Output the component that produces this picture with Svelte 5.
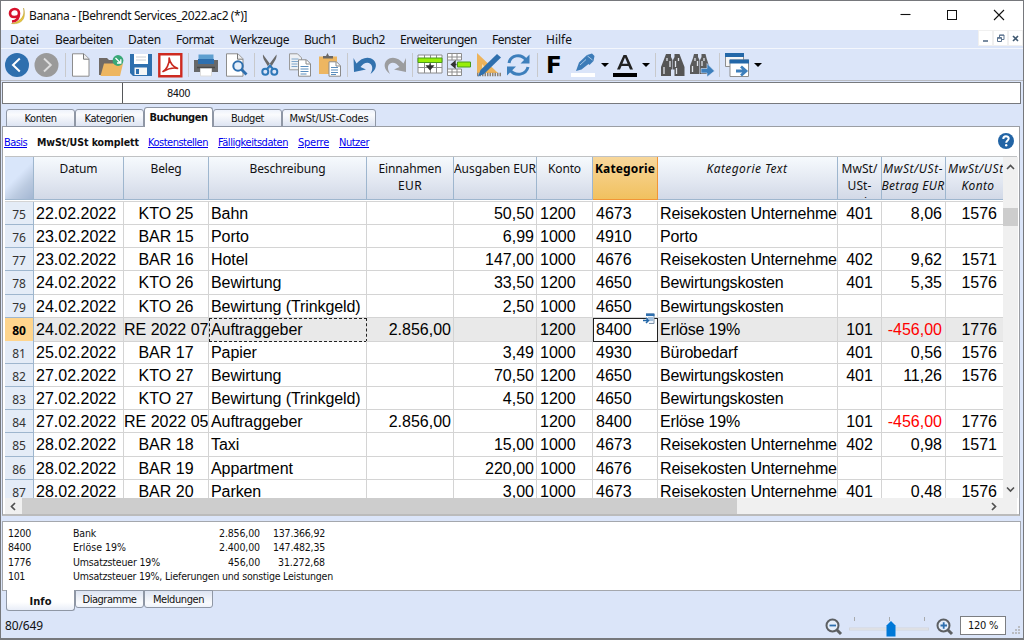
<script>
  const menus = [
    ['Datei', 10, 29], ['Bearbeiten', 55, 58], ['Daten', 128, 33], ['Format', 176, 38],
    ['Werkzeuge', 230, 59], ['Buch1', 304, 33], ['Buch2', 352, 33], ['Erweiterungen', 400, 77],
    ['Fenster', 492, 39], ['Hilfe', 546, 26]
  ];

  const tabs = [
    { name: 'Konten', w: 69, t: 32 },
    { name: 'Kategorien', w: 69, t: 50 },
    { name: 'Buchungen', w: 69, t: 58, on: true },
    { name: 'Budget', w: 69, t: 33 },
    { name: 'MwSt/USt-Codes', w: 94, t: 79 }
  ];

  const views = [
    { name: 'Basis', t: 23 }, { name: 'MwSt/USt komplett', t: 102, on: true },
    { name: 'Kostenstellen', t: 60 }, { name: 'Fälligkeitsdaten', t: 70 },
    { name: 'Sperre', t: 31 }, { name: 'Nutzer', t: 30 }
  ];

  const heads = [
    { l: [['Datum', 38]] }, { l: [['Beleg', 31]] }, { l: [['Beschreibung', 76]] },
    { l: [['Einnahmen', 63], ['EUR', 24]] }, { l: [['Ausgaben EUR', 82]] }, { l: [['Konto', 33]] },
    { l: [['Kategorie', 60]], on: true }, { l: [['Kategorie Text', 81]], it: true },
    { l: [['MwSt/', 36], ['USt-', 24], ['Code', 28]] },
    { l: [['MwSt/USt-', 60], ['Betrag EUR', 63]], it: true },
    { l: [['MwSt/USt-', 60], ['Konto', 33]], it: true, last: true }
  ];

  const R = 'Reisekosten Unternehmer';
  const rows = [
    [75, '22.02.2022', 'KTO 25', 'Bahn', '', '50,50', '1200', '4673', R, '401', '8,06', '1576'],
    [76, '23.02.2022', 'BAR 15', 'Porto', '', '6,99', '1000', '4910', 'Porto', '', '', ''],
    [77, '23.02.2022', 'BAR 16', 'Hotel', '', '147,00', '1000', '4676', R, '402', '9,62', '1571'],
    [78, '24.02.2022', 'KTO 26', 'Bewirtung', '', '33,50', '1200', '4650', 'Bewirtungskosten', '401', '5,35', '1576'],
    [79, '24.02.2022', 'KTO 26', 'Bewirtung (Trinkgeld)', '', '2,50', '1000', '4650', 'Bewirtungskosten', '', '', ''],
    [80, '24.02.2022', 'RE 2022 07', 'Auftraggeber', '2.856,00', '', '1200', '8400', 'Erlöse 19%', '101', '-456,00', '1776'],
    [81, '25.02.2022', 'BAR 17', 'Papier', '', '3,49', '1000', '4930', 'Bürobedarf', '401', '0,56', '1576'],
    [82, '27.02.2022', 'KTO 27', 'Bewirtung', '', '70,50', '1200', '4650', 'Bewirtungskosten', '401', '11,26', '1576'],
    [83, '27.02.2022', 'KTO 27', 'Bewirtung (Trinkgeld)', '', '4,50', '1200', '4650', 'Bewirtungskosten', '', '', ''],
    [84, '27.02.2022', 'RE 2022 05', 'Auftraggeber', '2.856,00', '', '1200', '8400', 'Erlöse 19%', '101', '-456,00', '1776'],
    [85, '28.02.2022', 'BAR 18', 'Taxi', '', '15,00', '1000', '4673', R, '402', '0,98', '1571'],
    [86, '28.02.2022', 'BAR 19', 'Appartment', '', '220,00', '1000', '4676', R, '', '', ''],
    [87, '28.02.2022', 'BAR 20', 'Parken', '', '3,00', '1000', '4673', R, '401', '0,48', '1576']
  ];
  const current = 80;
  const kinds = ['date', 'mid', 'desc', 'num', 'num', 'ktn', 'ktn', 'cat', 'code', 'num vat', 'acct'];

  const info = [
    ['1200', 'Bank', '2.856,00', '137.366,92', 23, 23],
    ['8400', 'Erlöse 19%', '2.400,00', '147.482,35', 23, 53],
    ['1776', 'Umsatzsteuer 19%', '456,00', '31.272,68', 23, 87],
    ['101', 'Umsatzsteuer 19%, Lieferungen und sonstige Leistungen', '', '', 17, 260]
  ];
  const amountWidth = { '2.856,00': 41, '2.400,00': 41, '456,00': 32, '137.366,92': 52, '147.482,35': 52, '31.272,68': 47 };

  // Tracks a label out or in so that it takes the given width.
  function fit(node, width) {
    const natural = node.getBoundingClientRect().width;
    const n = node.textContent.length;
    if (natural > 0 && n > 0) {
      const s = (width - natural) / n;
      node.style.letterSpacing = s.toFixed(3) + 'px';
    }
  }
</script>

<div class="window">
  <header class="title">
    <svg class="logo" width="17" height="18" viewBox="0 0 17 18">
      <path d="M15.500 1C17.500 8 13 15 3.500 16.500c5.500.8 11-1 12.500-6.500.8-3 .3-6-.5-9z" fill="#e8c63c" stroke="#b99a2c" stroke-width=".5" />
      <path d="M11 6.500C11 3.500 9.300 2 6.800 2 4 2 2 3.800 2 6.200c0 2.300 1.700 3.800 4.200 3.800 2.500 0 4.800-1.500 4.800-3.500 0 4.500-2 7.800-7 8" fill="none" stroke="#d8122c" stroke-width="2.600" />
    </svg>
    <span class="cap"><span use:fit={218}>Banana - [Behrendt Services_2022.ac2 (*)]</span></span>
    <svg class="winbtns" width="110" height="14" viewBox="0 0 110 14" fill="none" stroke="#111" stroke-width="1.100">
      <path d="M.5 6.500h10" />
      <rect x="47.500" y="2.500" width="9" height="9" stroke-width="1" />
      <path d="M94 2l10 10M104 2L94 12" />
    </svg>
  </header>

  <nav class="menu">
    <div class="items">
      {#each menus as m, i}
        <span class="item" style="width:{(i < 9 ? menus[i + 1][1] : 580) - m[1]}px"><span use:fit={m[2]}>{m[0]}</span></span>
      {/each}
    </div>
    <div class="mdi">
      <span><svg width="11" height="11" viewBox="0 0 11 11"><path d="M3 8h5" stroke="#4d6580" stroke-width="1.500" /></svg></span>
      <span><svg width="11" height="11" viewBox="0 0 11 11" fill="none" stroke="#5d7590"><path d="M2.500 4.500h4v4h-4zM4.500 4V2h4.500v4.500H7" /><path d="M2 5.300h5M4 2.300h5" /></svg></span>
      <span><svg width="11" height="11" viewBox="0 0 11 11"><path d="M3 3l5 5M8 3L3 8" stroke="#3f5870" stroke-width="1.600" /></svg></span>
    </div>
  </nav>

  <div class="toolbar">
    <svg viewBox="0 0 24 24"><circle cx="12" cy="12" r="12" fill="#2e6fae" /><path d="M14.800 5.500L8 12l6.800 6.500" fill="none" stroke="#fff" stroke-width="2" /></svg>
    <svg viewBox="0 0 24 24"><circle cx="11.500" cy="12" r="12" fill="#9a9a9a" /><path d="M9 5.500L15.800 12 9 18.500" fill="none" stroke="#dedede" stroke-width="1.900" /></svg>
    <i class="sep"></i>
    <svg viewBox="0 0 24 24"><path d="M2.500.8h11.500l5 5v17.400H2.500z" fill="#fff" stroke="#8d8d8d" /><path d="M13.500 1v5.200H19" fill="#eee" stroke="#777" /></svg>
    <svg viewBox="0 0 24 24"><path d="M0 5h8l2 2h6v6H6L3 22H0z" fill="#706a66" /><path d="M5 10.500h19L21 23H1.500z" fill="#edb661" /><circle cx="19" cy="7.500" r="5.400" fill="#39a878" /><path d="M16.500 5l5 5M21.800 6.300V10H18" fill="none" stroke="#fff" stroke-width="1.300" /></svg>
    <svg viewBox="0 0 24 24"><path d="M1 1h22v22H4l-3-3z" fill="#2e6fae" /><path d="M5 1h14v10H5z" fill="#fff" /><path d="M7 4h10M7 7h10" stroke="#c9cdd2" /><path d="M5.500 14.500h12.500V22H5.500z" fill="#f6f6f6" /><path d="M7 16h3v5H7z" fill="#2e6fae" /></svg>
    <svg viewBox="0 0 24 24"><path d="M1.300 1.300h22v22h-22z" fill="#fff" stroke="#ce2a20" stroke-width="2.400" /><path d="M5 18.500c2.500-1 7-7.500 6.200-13.500.6 5 4.500 9.500 8.300 10.300-4-.8-9 0-14.500 3.200z" fill="none" stroke="#c8281e" stroke-width="1.700" stroke-linejoin="round" /></svg>
    <i class="sep"></i>
    <svg viewBox="0 0 24 24"><path d="M0 7h24v12H0z" fill="#67686a" /><path d="M4.500 1.500h15V9h-15z" fill="#5e9fd0" /><path d="M4 6h16v5H4z" fill="#2e6fae" /><path d="M6.500 15h11v8h-11z" fill="#fff" stroke="#ddd" /><path d="M3 14.500h18" stroke="#484848" stroke-width="1.500" /></svg>
    <svg viewBox="0 0 24 24"><path d="M2.500.8h11.500l5 5v17.400H2.500z" fill="#fff" stroke="#8d8d8d" /><path d="M13.500 1v5.200H19" fill="#eee" stroke="#777" /><circle cx="14" cy="13" r="4.700" fill="#e6effa" stroke="#2e6fae" stroke-width="2" /><path d="M17.500 16.500l5 5" stroke="#2e6fae" stroke-width="2.800" /></svg>
    <i class="sep"></i>
    <svg viewBox="0 0 24 24"><path d="M5 1.500c-.5 3 1 6 6.500 14l2-2.500zM18.500 1.500c.5 3-1 6-6.500 14l-2-2.500z" fill="#6a6a6a" /><circle cx="7.300" cy="18.800" r="3" fill="none" stroke="#2e78b8" stroke-width="2" /><circle cx="16.300" cy="18.800" r="3" fill="none" stroke="#2e78b8" stroke-width="2" /><path d="M9 16l3-3.500 3 3.500" fill="none" stroke="#2e78b8" stroke-width="2" /></svg>
    <svg viewBox="0 0 24 24"><path d="M1.500.8h8l4 4v12H1.500z" fill="#eef1f5" stroke="#9b9b9b" /><path d="M3.500 6h7M3.500 8.500h7M3.500 11h6M3.500 13.500h6" stroke="#7fa6cc" /><path d="M10.500 6.800h8l4 4v12.400h-12z" fill="#fff" stroke="#8b8b8b" /><path d="M18 7v4h4" fill="none" stroke="#888" /><path d="M12.500 13.500h8M12.500 16h8M12.500 18.500h8M12.500 21h6" stroke="#5a8dbd" /></svg>
    <svg viewBox="0 0 24 24"><path d="M1 3.500h18V21H1z" fill="#edb661" /><path d="M5 5.500V3h3l1.500-3 1.500 3h4v2.500z" fill="#6a6866" /><path d="M11 8.800h7.500l4 4v10.400H11z" fill="#fff" stroke="#8b8b8b" /><path d="M18 9v4h4" fill="none" stroke="#888" /><path d="M13 14.500h7M13 17h7M13 19.500h7M13 21.500h5" stroke="#5a8dbd" /></svg>
    <i class="sep"></i>
    <svg viewBox="0 0 24 24"><path d="M.5 5l3 5.500C8 5 15.500 2.500 20.500 7c4 4 3 9.500-3 14 2.500-4.500 2.200-8 0-10-3-2.500-7-1-10 3l5.500 2.500L1 19z" fill="#3272ae" /></svg>
    <svg viewBox="0 0 24 24"><path d="M23 5v14l-12-2.500 5.500-2.500c-3-4-7-5.500-10-3-2.200 2-2 5.500.5 10C1 16.500 0 11 4 7c5-4.500 12-2 16.500 3.500z" fill="#9c9d9f" /></svg>
    <i class="sep"></i>
    <svg viewBox="0 0 24 24"><path d="M0 2h24v18H0z" fill="#fff" stroke="#8c8c8c" /><path d="M6.500 2v18M12.500 2v18M18.500 2v18M0 14.500h24" stroke="#8c8c8c" /><path d="M0 5h24v4.500H0z" fill="#98ee08" stroke="#4b9a1c" /><path d="M12 10.500v5M9 13l3 3.500 3-3.500z" stroke="#333" stroke-width="1.400" fill="#333" /></svg>
    <svg viewBox="0 0 24 24"><path d="M.5.500h14V7H.500zM.5 16h14v6.500H.500z" fill="#fff" stroke="#8c8c8c" /><path d="M5 0v7M10 0v7M5 16v7M10 16v7M0 4h15M0 19h15M.5 7v9" stroke="#8c8c8c" /><path d="M10.500 9h13v5h-13z" fill="#98ee08" stroke="#4b9a1c" /><path d="M9.500 11.500H5M8 8.500l-3.500 3L8 14.500z" stroke="#333" stroke-width="1.400" fill="#333" /></svg>
    <svg viewBox="0 0 24 24"><path d="M0 0l21 20H0z" fill="#edb35b" /><path d="M5 11l5 5H5z" fill="#f7dcae" /><path d="M0 21.500h24" stroke="#8b8276" stroke-width="3.500" stroke-dasharray="1.500 1" /><path d="M20 1l4 3.500L7 21l-6 2.500L3.500 17z" fill="#2e6fae" /></svg>
    <svg viewBox="0 0 24 24" fill="none" stroke="#3d7fbc" stroke-width="3"><path d="M3 10C4.500 2 15 0 20 7" /><path d="M22 14c-2 8-12.500 10-18 3" /><path d="M23.500 1.500v9h-9zM1 22.500v-9h9z" fill="#3d7fbc" stroke="none" /></svg>
    <i class="sep"></i>
    <b class="bold">F</b>
    <svg viewBox="0 0 24 24"><path d="M0 20h24v4H0z" fill="#fff" /><path d="M5 18l3-8.500 8-7.500 5-1.500 2.500 2.500-1 5-4 4-1-1-7 5.500z" fill="#3d7cb8" /><path d="M16.500 3l5 4M9 12l6-5.500" fill="none" stroke="#a9c8e6" /></svg>
    <i class="drop"></i>
    <svg viewBox="0 0 24 24"><path d="M4 16.500L10.500 2h3L20 16.500h-3L15.500 13h-7L7 16.500zM9.400 10.800h5.200L12 4.500z" fill="#222" fill-rule="evenodd" /><path d="M0 20h24v4H0z" fill="#000" /></svg>
    <i class="drop"></i>
    <i class="sep"></i>
    <svg viewBox="0 0 24 24"><g fill="#555"><path d="M5 1h5v3l1.500 3v16H0V14L3.500 5zM18.500 1h-5v3L12 7v16h11.500V14L20 5z" /></g><path d="M6 5v3M17.500 5v3M3 14v7M9 8v6M14.500 8v6M15.500 15v6" stroke="#dfe3ea" stroke-width="1.300" /><path d="M10 16.500h3.500V24H10z" fill="#dbe5f8" /></svg>
    <svg viewBox="0 0 24 24"><g fill="#5b5b5b"><path d="M4 1h4v3l1.500 3v14H0V13L3 5zM15.500 1h-4v3L10 7v14h9V13L16.500 5z" /></g><path d="M5 5v3M14 5v3M2.500 13v6M7.500 8v5M12 8v5" stroke="#dfe3ea" stroke-width="1.300" /><path d="M11 15.500h6v-5l7.500 7.500-7.500 6v-4h-6z" fill="#3d7fbc" stroke="#dbe5f8" stroke-width=".6" /></svg>
    <i class="sep"></i>
    <svg viewBox="0 0 24 24"><path d="M.5.500h18v13H.500z" fill="#f5f5f5" stroke="#8d8d8d" /><path d="M0 0h19v4H0z" fill="#2367a8" /><path d="M5 7h18.500v16.500H5z" fill="#fff" stroke="#8d8d8d" /><path d="M4.500 6.500h19.500v4H4.500z" fill="#2367a8" /><path d="M11 18h9M16 13.500l5 4.500-5 4.500" fill="none" stroke="#3d7fbc" stroke-width="2.800" /></svg>
    <i class="drop"></i>
  </div>

  <div class="entry">
    <div class="ref"></div>
    <div class="val"><span use:fit={23}>8400</span></div>
  </div>

  <div class="tabs">
    {#each tabs as t}
      <div class="tab" class:on={t.on} style="width:{t.w}px"><span use:fit={t.t}>{t.name}</span></div>
    {/each}
  </div>

  <main class="panel">
    <div class="views">
      {#each views as v}
        {#if v.on}<b use:fit={v.t}>{v.name}</b>{:else}<span class="link" use:fit={v.t}>{v.name}</span>{/if}
      {/each}
      <svg class="help" width="16" height="16" viewBox="0 0 16 16"><circle cx="8" cy="8" r="8" fill="#2264a5" /><path d="M5.300 6c0-3.700 5.400-3.400 5.400-.4 0 1.900-2.500 1.900-2.500 4.200" fill="none" stroke="#fff" stroke-width="2" /><circle cx="8.200" cy="12.200" r="1.200" fill="#fff" /></svg>
    </div>

    <div class="gridarea">
      <div class="sheet">
        <div class="cols head">
          <div class="corner"></div>
          {#each heads as h}
            <div class="th" class:on={h.on} class:it={h.it} class:last={h.last}>
              <div class="lines">
                {#each h.l as line}
                  <div class="ln"><span use:fit={line[1]}>{line[0]}</span></div>
                {/each}
              </div>
            </div>
          {/each}
        </div>
        <div class="lead"></div>
        {#each rows as r}
          <div class="cols row" class:cur={r[0] === current}>
            <div class="no"><span>{r[0]}</span></div>
            {#each kinds as k, i}
              <div class="td {k}" class:neg={r[i + 1].startsWith('-')} class:mark={r[0] === current && i === 2} class:sel={r[0] === current && i === 6}>
                <span>{r[i + 1]}</span>
                {#if r[0] === current && i === 6}
                  <svg class="pick" width="12" height="12" viewBox="0 0 12 12"><path d="M3 1h8v9.500H6" fill="#eef4fb" stroke="#7f93aa" /><path d="M3 .5h8.500V3H3z" fill="#2e6fae" /><path d="M5 5h5M6 7h4" stroke="#5a8dbd" /><path d="M0 7.500h5M3 5l2.500 2.500L3 10" fill="none" stroke="#2367a8" stroke-width="1.500" /></svg>
                {/if}
              </div>
            {/each}
          </div>
        {/each}
      </div>
      <div class="vscroll">
        <svg width="15" height="18" viewBox="0 0 15 18"><path d="M4 12L7.500 8.500 11 12" fill="none" stroke="#505050" stroke-width="1.600" /></svg>
        <i class="vthumb"></i>
        <svg width="15" height="18" viewBox="0 0 15 18"><path d="M4 7.500l3.500 3.500L11 7.500" fill="none" stroke="#505050" stroke-width="1.600" /></svg>
      </div>
    </div>
    <div class="hscroll">
      <svg width="17" height="15" viewBox="0 0 17 15"><path d="M10 4L6.500 7.500 10 11" fill="none" stroke="#505050" stroke-width="1.700" /></svg>
      <i class="hthumb"></i>
      <svg width="17" height="15" viewBox="0 0 17 15"><path d="M7 4l3.500 3.500L7 11" fill="none" stroke="#505050" stroke-width="1.700" /></svg>
    </div>
  </main>

  <section class="info">
    {#each info as n}
      <div class="irow">
        <div><span use:fit={n[4]}>{n[0]}</span></div>
        <div><span use:fit={n[5]}>{n[1]}</span></div>
        {#if n[2]}
          <div class="r"><span use:fit={amountWidth[n[2]]}>{n[2]}</span></div>
          <div class="r"><span use:fit={amountWidth[n[3]]}>{n[3]}</span></div>
        {/if}
      </div>
    {/each}
  </section>

  <div class="btabs">
    <div class="btab on"><span use:fit={22}>Info</span></div>
    <div class="btab"><span use:fit={54}>Diagramme</span></div>
    <div class="btab"><span use:fit={51}>Meldungen</span></div>
  </div>

  <footer class="status">
    <span class="pos"><span use:fit={38}>80/649</span></span>
    <svg class="zoom" width="122" height="24" viewBox="0 0 122 24">
      <g fill="none" stroke="#5c5f63" stroke-width="2"><circle cx="7.500" cy="9.500" r="6" fill="#e6effb" /><path d="M12 14l4 4" stroke-width="3" /></g>
      <path d="M4.500 9.500h6.500" stroke="#2e6fae" stroke-width="1.800" />
      <path d="M24 13h80" stroke="#d3d6dc" stroke-width="3" /><path d="M25 13h78" stroke="#e8e9ec" />
      <path d="M29.500 1v4M64.500 1v4M99.500 1v4" stroke="#a9abad" />
      <path d="M61.500 20.500V9.500L66 5l4.500 4.500v11z" fill="#0078d7" />
    </svg>
    <svg class="plus" width="18" height="20" viewBox="0 0 18 20">
      <g fill="none" stroke="#5c5f63" stroke-width="2"><circle cx="7.500" cy="7.500" r="6" fill="#e6effb" /><path d="M12 12l4 4" stroke-width="3" /></g>
      <path d="M4.500 7.500h6.500M7.700 4.300v6.500" stroke="#2e6fae" stroke-width="1.800" />
    </svg>
    <div class="pct"><span use:fit={30}>120 %</span></div>
    <svg class="grip" width="9" height="10" viewBox="0 0 9 10"><path d="M6 1h2v2H6zM3 4h2v2H3zM6 4h2v2H6zM0 7h2v2H0zM3 7h2v2H3zM6 7h2v2H6z" fill="#b9bcc2" /></svg>
  </footer>
</div>

<style>
  :global(body) { margin: 0; background: #fff; overflow: hidden; }
  * { box-sizing: border-box; }
  svg { display: block; flex: none; }
  span, b { white-space: pre; }
  .window {
    width: 1024px; height: 640px; display: flex; flex-direction: column; overflow: hidden;
    border: 1px solid #76787c; border-bottom-width: 2px; background: #dbe5f9;
    font-family: 'Noto Sans', 'Open Sans', sans-serif; font-size: 12px; color: #111;
  }
  .title { height: 29px; flex: none; background: #fff; display: flex; align-items: center; padding-left: 7px; }
  .cap { margin-left: 4px; flex: 1; line-height: 16px; }
  .winbtns { margin: -2px 13px 0 0; }
  .menu { height: 19px; flex: none; display: flex; justify-content: space-between; border-bottom: 1px solid #f4f7fd; }
  .items { display: flex; padding-left: 9px; line-height: 19px; }
  .item { flex: none; }
  .mdi { display: flex; gap: 2px; background: #f0f0f0; padding: 1px 1px 0 1px; height: 16px; }
  .mdi span { width: 13px; height: 14px; background: #fff; display: flex; align-items: center; justify-content: center; }
  .toolbar {
    height: 32px; flex: none; display: grid; padding: 4px 0 0 4px; border-bottom: 1px solid #b9bcc3;
    grid-template-columns: 30px 30px 5px 29px 30px 29px 30px 6px 30px 30px 4px 30px 30px 29px 6px 30px 29px 6px 29px 30px 29px 31px 5px 29px 29px 13px 28px 14px 6px 29px 29px 6px 28px 14px;
  }
  .toolbar svg { width: 24px; height: 24px; overflow: visible; }
  .sep { width: 1px; height: 24px; background: #c8c9cc; }
  .drop { width: 0; height: 0; margin: 10px 0 0 1px; border: 4px solid transparent; border-top-color: #000; border-bottom: 0; }
  .bold { font: bold 23px/25px 'DejaVu Sans', sans-serif; color: #000; padding-left: 4px; }
  .entry { height: 22px; flex: none; margin: 1px 2px 0 1px; border: 1px solid #77797d; background: #fff; display: flex; font: 11px/21px 'DejaVu Sans Condensed', 'DejaVu Sans', sans-serif; font-stretch: condensed; }
  .ref { width: 120px; border-right: 1px solid #55575a; }
  .val { padding-left: 44px; }
  .tabs { height: 23px; flex: none; display: flex; align-items: flex-end; padding-left: 5px; font: 11px/15px 'DejaVu Sans Condensed', 'DejaVu Sans', sans-serif; font-stretch: condensed; margin-bottom: -1px; z-index: 1; }
  .tab { height: 18px; flex: none; border: 1px solid #8f97a5; border-radius: 3px 3px 0 0; text-align: center; background: linear-gradient(#eef3fc, #fafbfd 30%, #dde4f2); padding-top: 1px; }
  .tab.on { height: 20px; background: #fff; border-bottom: 0; font-weight: bold; padding-top: 2px; }
  .panel { height: 390px; flex: none; margin: 0 3px 0 1px; border: 1px solid #9b9ea4; border-bottom: 2px solid #bbb; background: #fff; padding: 0 2px 0 2px; }
  .views { height: 29px; display: flex; gap: 10px; align-items: center; padding: 2px 0 0 0; margin-left: -1px; font: 11px/15px 'DejaVu Sans Condensed', 'DejaVu Sans', sans-serif; font-stretch: condensed; }
  .views b { font-size: 10.5px; margin-right: -1px; }
  .link { color: #0000ee; text-decoration: underline; }
  .help { margin: -3px 3px 0 auto; }
  .gridarea { height: 342px; display: flex; border-top: 1px solid #c0c2c4; }
  .sheet { width: 998px; overflow: hidden; flex: none; }
  .cols { display: grid; grid-template-columns: 29px 90px 85px 158px 87px 83px 56px 65px 180px 44px 64px 57px; }
  .head { height: 43px; }
  .corner { background: linear-gradient(135deg, #d9e6fa 45%, #bccbe1 70%, #a3b6d2); border-right: 1px solid #9eb6ce; border-bottom: 1px solid #9eb6ce; }
  .th { height: 43px; overflow: hidden; background: linear-gradient(#f6fafd, #e5eaf3 50%, #d2d9e7); border-right: 1px solid #9eb6ce; border-bottom: 1px solid #9eb6ce; padding-top: 3px; }
  .lines { height: 38px; overflow: hidden; }
  .ln { line-height: 17px; height: 17px; display: flex; justify-content: center; }
  .th.on { background: linear-gradient(#f8d79b, #f1c15f); font-weight: bold; color: #000; border-color: #f29536; }
  .th.it { font-style: italic; }
  .th.it .ln { margin-left: -1px; }
  .th.last { border-right: 0; }
  .th.last .ln { margin-right: -8px; }
  .lead { height: 2px; border-bottom: 1px solid #d4d4d4; }
  .row { height: 23.15px; font: 16px/22px 'Liberation Sans', Arial, sans-serif; color: #000; }
  .no { background: #e4ecf7; border-right: 1px solid #9eb6ce; border-bottom: 1px solid #9eb6ce; text-align: center; font: 12px/25px 'Noto Sans', sans-serif; color: #333; overflow: hidden; }
  .td { border-right: 1px solid #d4d4d4; border-bottom: 1px solid #d4d4d4; overflow: hidden; padding: 1px 2px 0 2px; min-width: 0; }
  .mid { text-align: center; padding: 1px 0 0; }
  .desc { letter-spacing: -.09px; }
  .cat { letter-spacing: -.17px; padding-right: 0; }
  .ktn { padding-left: 3px; }
  .num { text-align: right; }
  .vat { padding-right: 3px; }
  .code { text-align: center; }
  .acct { text-align: right; padding-right: 6px; border-right: 0; }
  .neg { color: #f00; }
  .cur .td { background: #e9e9e9; }
  .cur .no { background: #ffd58d; font-weight: bold; color: #000; border-bottom-color: #f29536; }
  .cur .mark { border: 1px dashed #222; padding: 0 1px; line-height: 22px; }
  .cur .sel { background: #fff; border: 1px solid #222; padding: 0 2px; position: relative; overflow: visible; }
  .pick { position: absolute; right: 2px; top: -6px; }
  .vscroll { width: 15px; background: #f0f0f0; display: flex; flex-direction: column; }
  .vthumb { height: 18px; margin: 33px 0 auto; background: #cdcdcd; }
  .hscroll { height: 16px; background: #f0f0f0; display: flex; align-items: center; padding-right: 15px; justify-content: space-between; }
  .hthumb { height: 16px; width: 715px; background: #cdcdcd; margin-right: auto; }
  .info { height: 70px; flex: none; margin: 5px 2px 0 1px; border: 1px solid #a4a7ad; background: #fff; padding: 4px 0 0 5px; font: 10.5px/14.4px 'DejaVu Sans Condensed', 'DejaVu Sans', sans-serif; font-stretch: condensed; }
  .irow { display: grid; grid-template-columns: 65px 135px 52px 65px; height: 14.4px; }
  .r { text-align: right; }
  .btabs { height: 21px; flex: none; display: flex; padding-left: 5px; margin-top: -1px; font: 11px/15px 'DejaVu Sans Condensed', 'DejaVu Sans', sans-serif; font-stretch: condensed; }
  .btab { width: 69px; height: 18px; border: 1px solid #8f97a5; border-radius: 0 0 3px 3px; text-align: center; background: linear-gradient(#dde4f2, #fafbfd 75%, #eef3fc); padding-top: 1px; }
  .btab.on { height: 21px; border-top: 0; background: linear-gradient(#fff 60%, #e9eef8); font-weight: bold; padding-top: 4px; }
  .status { flex: 1; display: flex; align-items: flex-start; }
  .pos { margin-left: 4px; flex: 1; line-height: 16px; padding-top: 7px; }
  .zoom { margin-top: 5px; }
  .plus { margin: 7px 0 0 -11px; }
  .pct { margin: 5px 0 0 6px; width: 46px; height: 19px; border: 1px solid #7c7e82; background: #fff; text-align: center; font: 11px/17px 'DejaVu Sans Condensed', 'DejaVu Sans', sans-serif; font-stretch: condensed; }
  .grip { margin: 14px 2px 0 6px; }
</style>
